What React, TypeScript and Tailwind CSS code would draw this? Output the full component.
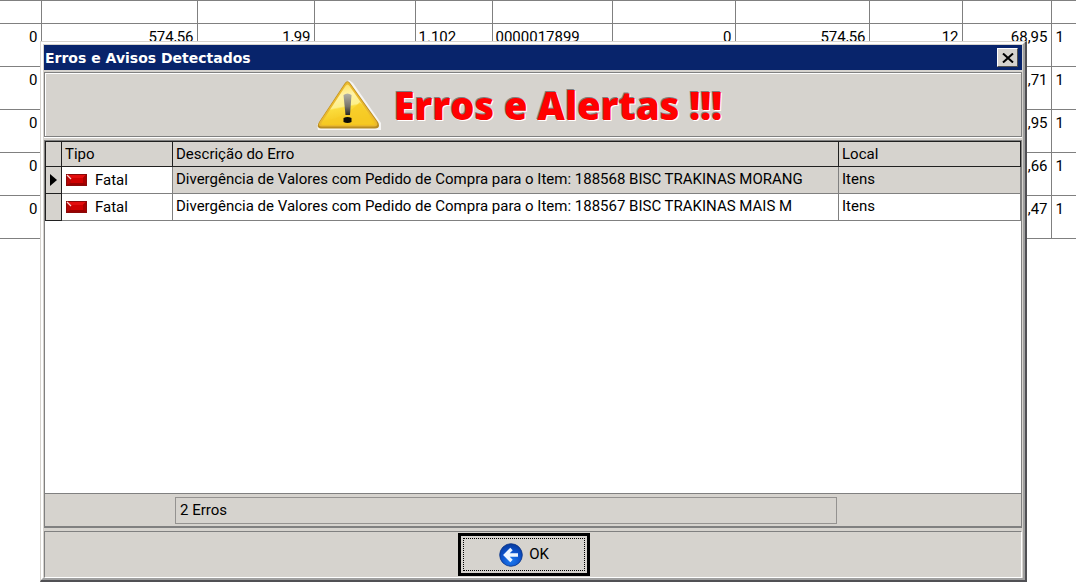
import React from "react";

type Align = "left" | "right";

const backgroundColumns: { width: string; align: Align }[] = [
  { width: "w-[41px]", align: "right" },
  { width: "w-[156px]", align: "right" },
  { width: "w-[117px]", align: "right" },
  { width: "w-[101px]", align: "right" },
  { width: "w-[77px]", align: "left" },
  { width: "w-[120px]", align: "left" },
  { width: "w-[123px]", align: "right" },
  { width: "w-[134px]", align: "right" },
  { width: "w-[93px]", align: "right" },
  { width: "w-[89px]", align: "right" },
  { width: "w-auto", align: "left" },
];

const backgroundRows: string[][] = [
  ["0", "574,56", "1,99", "", "1.102", "0000017899", "0", "574,56", "12", "68,95", "1"],
  ["0", "", "", "", "", "", "", "", "", ",71", "1"],
  ["0", "", "", "", "", "", "", "", "", ",95", "1"],
  ["0", "", "", "", "", "", "", "", "", ",66", "1"],
  ["0", "", "", "", "", "", "", "", "", ",47", "1"],
];

const errors = [
  {
    type: "Fatal",
    description:
      "Divergência de Valores com Pedido de Compra para o Item: 188568 BISC TRAKINAS MORANG",
    place: "Itens",
  },
  {
    type: "Fatal",
    description:
      "Divergência de Valores com Pedido de Compra para o Item: 188567 BISC TRAKINAS MAIS M",
    place: "Itens",
  },
];

function BackgroundTable() {
  return (
    <table className="w-full table-fixed border-collapse border-y border-[#808080]">
      <colgroup>
        {backgroundColumns.map((c, i) => (
          <col key={i} className={c.width} />
        ))}
      </colgroup>
      <tbody>
        <tr className="h-[23px]">
          {backgroundColumns.map((_, i) => (
            <td key={i} className="border-r border-b border-[#808080] p-0 last:border-r-0" />
          ))}
        </tr>
        {backgroundRows.map((row, r) => (
          <tr key={r} className="h-[43px] align-top">
            {row.map((value, i) => (
              <td
                key={i}
                className={`border-r border-b border-[#808080] px-[3px] pt-1 pb-0 leading-[18px] whitespace-nowrap last:border-r-0 last:pl-1 ${
                  backgroundColumns[i].align === "right" ? "text-right" : "text-left"
                }`}
              >
                {value}
              </td>
            ))}
          </tr>
        ))}
      </tbody>
    </table>
  );
}

function WarningIcon() {
  return (
    <svg viewBox="0 0 66 52" className="h-[52px] w-[66px]" aria-hidden="true">
      <defs>
        <linearGradient id="warnFill" x1="0" y1="0" x2="0.25" y2="1">
          <stop offset="0" stopColor="#fdd94a" />
          <stop offset="0.35" stopColor="#fff3a8" />
          <stop offset="0.6" stopColor="#fdf08a" />
          <stop offset="0.64" stopColor="#fbdc3c" />
          <stop offset="1" stopColor="#f4c51d" />
        </linearGradient>
        <linearGradient id="warnMark" x1="0" y1="0" x2="0" y2="1">
          <stop offset="0" stopColor="#b4b2a6" />
          <stop offset="0.6" stopColor="#77746a" />
          <stop offset="1" stopColor="#292721" />
        </linearGradient>
      </defs>
      <path d="M33 1 37 4 65 44V51H2L1 46 29 4Z" fill="#fff" opacity=".75" />
      <path
        d="M28.5 4.5Q31.5 0 34.5 4.5L62 43Q65 49 59 49.500H5Q-.5 49 3 43Z"
        fill="#b98c22"
      />
      <path
        d="M29 5Q31.500 1 34 5L60.500 42.500Q63 47.500 58 47.500H6Q1 47.500 4 42.500Z"
        fill="#eab92e"
      />
      <path d="M29.500 7Q31.500 4 33.500 7L58.500 43Q60 46 57 46H7Q4 46 6 43Z" fill="url(#warnFill)" />
      <path d="M8 42Q29 39 44 23L57 43Q57 45 54 45H8Q6 45 8 42Z" fill="#f6ca25" opacity=".7" />
      <path d="M27.500 16Q31.500 13 35.500 16L34 36H29.500Z" fill="url(#warnMark)" />
      <path d="M27.500 39Q31.500 37 35.500 39V43Q31.500 45 27.500 43Z" fill="#0d0c08" />
    </svg>
  );
}

function FatalIcon() {
  return (
    <svg viewBox="0 0 21 12" className="h-3 w-[21px] shrink-0" aria-hidden="true">
      <path d="M0 0H21V12H0Z" fill="#8b0909" />
      <path d="M1 1H20L17 4H5Z" fill="#e30d0d" />
      <path d="M1 1 5 4V9L1 11Z" fill="#b80505" />
      <path d="M5 4H17V9H5Z" fill="#cf0000" />
      <path d="M17 4 20 1V11L17 9Z" fill="#a00" />
      <path d="M1 11 5 9H17L20 11Z" fill="#900" />
      <path d="M1 1 5 5" stroke="#ffd0d0" strokeWidth="1.300" />
    </svg>
  );
}

function BackIcon() {
  return (
    <svg viewBox="0 0 24 24" className="size-6" aria-hidden="true">
      <defs>
        <radialGradient id="backFill" cx=".5" cy=".75" r=".75">
          <stop offset="0" stopColor="#1d7af0" />
          <stop offset="0.6" stopColor="#0c50c8" />
          <stop offset="1" stopColor="#073a9c" />
        </radialGradient>
      </defs>
      <circle cx="12" cy="12" r="11.300" fill="url(#backFill)" stroke="#0a3487" strokeWidth="0.800" />
      <path
        d="M12.500 6 6.500 12 12.500 18M7 12H19"
        fill="none"
        stroke="#eef6ff"
        strokeWidth="3.400"
      />
    </svg>
  );
}

function ErrorTable() {
  return (
    <table className="w-full table-fixed border-collapse leading-[18px]">
      <colgroup>
        <col className="w-4" />
        <col className="w-[111px]" />
        <col className="w-auto" />
        <col className="w-[182px]" />
      </colgroup>
      <thead>
        <tr className="h-[25px] bg-[#d6d3ce] text-left">
          <th className="border border-[#202020] p-0" aria-label="Linha" />
          <th className="border border-[#202020] px-[3px] py-0 font-normal">Tipo</th>
          <th className="border border-[#202020] px-[3px] py-0 font-normal">Descrição do Erro</th>
          <th className="border border-[#202020] px-[3px] py-0 font-normal">Local</th>
        </tr>
      </thead>
      <tbody>
        {errors.map((e, i) => (
          <tr key={i} className="h-[27px]">
            <td className="border border-[#202020] bg-[#d6d3ce] p-0">
              {i === 0 && (
                <svg viewBox="0 0 7 12" className="ml-1 h-3 w-[7px]" aria-hidden="true">
                  <path d="M0 0 7 6 0 12Z" fill="#000" />
                </svg>
              )}
            </td>
            <td className="border border-[#808080] px-1 py-0">
              <span className="flex items-center gap-2">
                <FatalIcon />
                {e.type}
              </span>
            </td>
            <td
              className={`overflow-hidden border border-[#808080] px-[3px] pt-0 pb-0.5 whitespace-nowrap ${
                i === 0 ? "bg-[#d6d3ce]" : "bg-white"
              }`}
            >
              {e.description}
            </td>
            <td
              className={`border border-[#808080] px-[3px] pt-0 pb-0.5 ${
                i === 0 ? "bg-[#d6d3ce]" : "bg-white"
              }`}
            >
              {e.place}
            </td>
          </tr>
        ))}
      </tbody>
    </table>
  );
}

function ErrorDialog() {
  return (
    <section
      role="dialog"
      aria-labelledby="dialog-title"
      className="absolute top-[41px] right-[49px] bottom-0 left-10 flex flex-col border-t border-r-2 border-b-2 border-l border-t-[#d6d3ce] border-r-[#505054] border-b-[#505054] border-l-[#d6d3ce] bg-[#d6d3ce]"
    >
      <div className="flex flex-1 flex-col border-t-2 border-r-2 border-b-2 border-l-2 border-t-white border-r-[#a0a0a0] border-b-[#a0a0a0] border-l-white px-px pt-px">
        <header className="flex h-[25px] items-center justify-between bg-[#08246b] pr-1 pl-px">
          <h1
            id="dialog-title"
            className="font-['DejaVu_Sans',sans-serif] text-[14px] leading-5 font-bold text-white"
          >
            Erros e Avisos Detectados
          </h1>
          <button
            type="button"
            aria-label="Fechar"
            className="flex h-[19px] w-[21px] items-center justify-center border border-t-white border-r-[#505050] border-b-[#505050] border-l-white bg-[#d6d3ce]"
          >
            <svg viewBox="0 0 12 10" className="h-2.5 w-3" aria-hidden="true">
              <path d="M1 0.500 11 9.500M11 0.500 1 9.500" stroke="#000" strokeWidth="2" />
            </svg>
          </button>
        </header>

        <div className="mt-0.5 flex h-[65px] items-center justify-center gap-3 border border-[#808080] pr-7 shadow-[inset_1px_1px_0_#fff,0_1px_0_#fff]">
          <WarningIcon />
          <h2 className="font-['Open_Sans','Noto_Sans',sans-serif] text-[38px] leading-[44px] font-extrabold text-[#ff0000] [text-shadow:-1px_-1px_0_#808080,1px_1px_0_#fff]">
            Erros e Alertas !!!
          </h2>
        </div>

        <div className="mt-[3px] flex flex-1 flex-col border border-[#808080] bg-white">
          <ErrorTable />
          <div className="mt-auto flex h-[34px] items-center border-t border-b border-[#808080] bg-[#d6d3ce] pr-[184px] pl-[130px]">
            <p className="h-[27px] flex-1 border border-[#949290] px-1 leading-[25px]">2 Erros</p>
          </div>
        </div>

        <footer className="mt-[3px] flex h-[47px] items-center justify-center border border-t-[#808080] border-r-white border-b-white border-l-[#808080] pr-[18px]">
          <button
            type="button"
            className="h-[43px] w-[132px] border-[3px] border-black bg-[#d6d3ce] p-0.5"
          >
            <span className="flex h-full items-center justify-center gap-1.5 border border-dotted border-black">
              <BackIcon />
              OK
            </span>
          </button>
        </footer>
      </div>
    </section>
  );
}

export default function App() {
  return (
    <main className="relative min-h-screen overflow-hidden bg-white font-[Roboto,'Liberation_Sans',sans-serif] text-[15px] text-black">
      <BackgroundTable />
      <ErrorDialog />
    </main>
  );
}
